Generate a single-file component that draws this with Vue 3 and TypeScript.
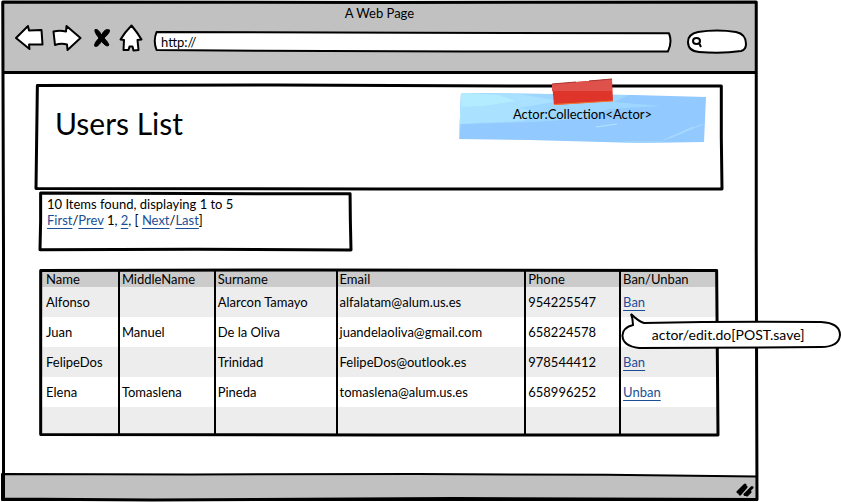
<script setup lang="ts">
import { ref } from 'vue'

interface User {
  name: string
  middleName: string
  surname: string
  email: string
  phone: string
  action: string
}

const columns = [
  { label: 'Name', weight: 78 },
  { label: 'MiddleName', weight: 96 },
  { label: 'Surname', weight: 122 },
  { label: 'Email', weight: 189 },
  { label: 'Phone', weight: 95 },
  { label: 'Ban/Unban', weight: 99 },
]
const totalWeight = columns.reduce((sum, c) => sum + c.weight, 0)

const users: User[] = [
  { name: 'Alfonso', middleName: '', surname: 'Alarcon Tamayo', email: 'alfalatam@alum.us.es', phone: '954225547', action: 'Ban' },
  { name: 'Juan', middleName: 'Manuel', surname: 'De la Oliva', email: 'juandelaoliva@gmail.com', phone: '658224578', action: '' },
  { name: 'FelipeDos', middleName: '', surname: 'Trinidad', email: 'FelipeDos@outlook.es', phone: '978544412', action: 'Ban' },
  { name: 'Elena', middleName: 'Tomaslena', surname: 'Pineda', email: 'tomaslena@alum.us.es', phone: '658996252', action: 'Unban' },
  { name: '', middleName: '', surname: '', email: '', phone: '', action: '' },
]

const address = ref('http://')
const query = ref('')
</script>

<template>
  <div class="page">
    <div class="window">
      <header class="chrome">
        <div class="window-title">A Web Page</div>
        <div class="toolbar">
          <nav class="nav-buttons">
            <button type="button" class="tool back" aria-label="Back">
              <svg width="30" height="28" viewBox="0 0 30 28"><path d="M2 14 14 2 15 6.500 27.500 6 28.500 20.500 15 20.500 15.500 25Z" /></svg>
            </button>
            <button type="button" class="tool forward" aria-label="Forward">
              <svg width="30" height="28" viewBox="0 0 30 28"><path d="M1.500 7.500Q8 6 14 7.500L14.500 2 28.500 14 15.500 26 15 20.500Q9 19 3 21Z" /></svg>
            </button>
            <button type="button" class="tool stop" aria-label="Stop">
              <svg width="18" height="22" viewBox="0 0 18 22">
                <path class="solid" d="M2 2.500Q5 1.500 8.500 8Q12 1 16.500 3Q17 6 11 11Q15 15 16 18Q14 21 8.500 14.500Q4 21 1.500 19Q1 16 6 11Q1 5 2 2.500Z" />
              </svg>
            </button>
            <button type="button" class="tool home" aria-label="Home">
              <svg width="24" height="28" viewBox="0 0 24 28"><path d="M12.500 1.500Q18 8 22.500 15.500L18.500 16 19.500 26 14.500 26.500 13.500 22.500 10.500 22.500 9.500 26 4.500 26 5 16 1.500 15.500Q6 8 12.500 1.500Z" /></svg>
            </button>
          </nav>
          <label class="address">
            <svg class="sketch" viewBox="0 0 100 100" preserveAspectRatio="none" aria-hidden="true">
              <path class="filled" d="M0.300 0 50 4 99.600 6Q100.300 50 99.400 98L60 97 20 94 0.300 90Q-0.400 45 0.300 0Z" />
            </svg>
            <input v-model="address" type="text" aria-label="Address" />
          </label>
          <label class="search">
            <svg class="sketch" viewBox="0 0 60 24" preserveAspectRatio="none" aria-hidden="true">
              <path class="filled" d="M11 2Q30 -1 49 2Q59 4 59 14Q59 20 54 21Q35 24 12 22Q1 21 1 12Q1 4 11 2Z" />
            </svg>
            <svg class="lens" width="12" height="14" viewBox="0 0 12 14" aria-hidden="true">
              <path d="M5.500 3Q2 3 2 6Q2 9 5.500 9Q9 9 9 6Q9 3 5.500 3M8 8 10 12" />
            </svg>
            <input v-model="query" type="search" aria-label="Search" />
          </label>
        </div>
      </header>

      <main class="content">
        <section class="panel heading">
          <svg class="sketch" viewBox="0 0 100 100" preserveAspectRatio="none" aria-hidden="true">
            <path d="M0.200 0.500 35 0 70 1 99.900 1 99.900 50 100 100 50 100 0 99.500 0.100 50Z" />
          </svg>
          <h1>Users List</h1>
          <div class="note">
            <svg class="note-paper" viewBox="0 0 247 50" preserveAspectRatio="none" aria-hidden="true">
              <path fill="#92c9ff" d="M2 0 90 1 175 2 247 4 245 49 180 50 70 47 0 46Z" />
              <path fill="#9dd7ff" d="M2 0 90 1 170 2 155 9 202 13 150 16 120 26 74 29 1 31Z" />
              <path fill="#a9e1ff" d="M2 0 60 1 100 8 60 15 84 20 63 28 1 31Z" />
              <path fill="#b4ecff" d="M2 0 39 2 57 8 24 13 2 14Z" />
              <path fill="none" stroke="#b0e7ff" d="M3 4 0 45M62 6H66M137 34 158 31" />
              <path fill="none" stroke="#aadcff" d="M205 47 234 34M211 45 244 31M165 49H205" />
            </svg>
            <svg class="tape" width="62" height="28" viewBox="0 0 62 28" aria-hidden="true">
              <path fill="#df3429" d="M0 6 60 1 61 23 2 27Z" />
              <path fill="#df514b" d="M0 6 60 1 60 13 0 13Z" />
              <path fill="none" stroke="#a93834" d="M0 6 24 4M37 3 60 1" />
              <path fill="none" stroke="#f07832" d="M2 26.500 61 23" />
            </svg>
            <span>Actor:Collection&lt;Actor&gt;</span>
          </div>
        </section>

        <section class="panel pager">
          <svg class="sketch" viewBox="0 0 100 100" preserveAspectRatio="none" aria-hidden="true">
            <path d="M0.200 0 50 1 99.700 1.500 99.800 50 100 100 50 98.500 0 99.500 0.200 50Z" />
          </svg>
          <div>10 Items found, displaying 1 to 5</div>
          <div><a href="#first">First</a>/<a href="#prev">Prev</a> 1, <a href="#page-2">2</a>, [ <a href="#next">Next</a>/<a href="#last">Last</a>]</div>
        </section>

        <section class="users">
          <table>
            <colgroup>
              <col v-for="c in columns" :key="c.label" :style="{ width: (c.weight / totalWeight) * 100 + '%' }" />
            </colgroup>
            <thead>
              <tr>
                <th v-for="c in columns" :key="c.label" scope="col">{{ c.label }}</th>
              </tr>
            </thead>
            <tbody>
              <tr v-for="(u, i) in users" :key="i">
                <td>{{ u.name }}</td>
                <td>{{ u.middleName }}</td>
                <td>{{ u.surname }}</td>
                <td>{{ u.email }}</td>
                <td>{{ u.phone }}</td>
                <td class="action">
                  <a v-if="u.action" href="#edit">{{ u.action }}</a>
                  <div v-if="i === 0" class="callout" role="tooltip">
                    <svg viewBox="0 0 220 36" aria-hidden="true">
                      <path d="M12 12Q12 6 10 1Q17 8 23 10Q110 8 200 9Q219 10 219 22Q218 34 200 34Q110 35 18 35Q2 33 1.500 23Q1 15 12 12Z" />
                    </svg>
                    <span>actor/edit.do[POST.save]</span>
                  </div>
                </td>
              </tr>
            </tbody>
          </table>
          <svg class="sketch" viewBox="0 0 100 100" preserveAspectRatio="none" aria-hidden="true">
            <path d="M0.100 0.300 40 0 99.800 0.300 99.900 50 100 100 50 100 0.100 99.700 0.100 50Z" />
          </svg>
        </section>
      </main>

      <footer class="status">
        <svg class="sketch" viewBox="0 0 100 100" preserveAspectRatio="none" aria-hidden="true">
          <path class="bar" d="M0 0 25 2 55 0 80 3 100 10V100H0Z" />
        </svg>
        <svg class="grip" width="18" height="14" viewBox="0 0 18 14" aria-hidden="true">
          <path d="M2 9 9 2M4 11 10 4M9 11.500 16 4.500M11 12 14 9" />
        </svg>
      </footer>

      <svg class="sketch outline" viewBox="0 0 100 100" preserveAspectRatio="none" aria-hidden="true">
        <path d="M0.100 0 50 0.100 99.900 0 99.900 50 100 99.900 60 99.700 20 100 0.200 99.800 0.200 50Z" />
      </svg>
    </div>
  </div>
</template>

<style>
body {
  margin: 0;
  background: #fff;
}
</style>

<style scoped>
* {
  box-sizing: border-box;
}

.page {
  display: flex;
  min-height: 100vh;
  padding: 2px 84px 2px 2px;
  color: #000;
  font-family: Lato, sans-serif;
  font-size: 13px;
  line-height: 16px;
}

.window {
  position: relative;
  display: flex;
  flex: 1;
  flex-direction: column;
  min-width: 0;
}

.sketch {
  position: absolute;
  inset: 0;
  width: 100%;
  height: 100%;
  overflow: visible;
  pointer-events: none;
}

.sketch path {
  fill: none;
  stroke: #000;
  stroke-width: 2px;
  stroke-linejoin: round;
  vector-effect: non-scaling-stroke;
}

.sketch .filled {
  fill: #fff;
}

.sketch .bar {
  fill: #c1c1c1;
}

.outline path {
  stroke-width: 3px;
}

.chrome {
  height: 72px;
  padding-top: 3px;
  border-bottom: 3px solid #000;
  background: #c1c1c1;
}

.window-title {
  text-align: center;
}

.toolbar {
  display: flex;
  align-items: center;
  gap: 12px;
  margin-top: 1px;
  padding: 0 10px 0 12px;
}

.nav-buttons {
  display: flex;
  align-items: center;
  gap: 8px;
}

.tool {
  display: block;
  padding: 0;
  border: 0;
  background: none;
}

.tool svg {
  display: block;
  fill: #fff;
  stroke: #000;
  stroke-width: 2px;
  stroke-linejoin: round;
}

.tool .solid {
  fill: #000;
  stroke-width: 1px;
}

.stop {
  margin-left: 3px;
}

.address,
.search {
  position: relative;
  display: flex;
  align-items: center;
  margin-top: 8px;
}

.address {
  flex: 1;
  height: 20px;
}

.search {
  width: 60px;
  height: 24px;
  margin-left: 4px;
}

input {
  position: relative;
  width: 100%;
  min-width: 0;
  padding: 0 6px;
  border: 0;
  outline: 0;
  background: none;
  color: inherit;
  font: inherit;
}

.lens {
  position: relative;
  flex: none;
  margin-left: 4px;
  fill: none;
  stroke: #000;
  stroke-width: 2px;
}

.search input {
  padding: 0 4px 0 2px;
  appearance: none;
}

.content {
  flex: 1;
  padding: 11px 35px 36px 34px;
}

.panel {
  position: relative;
}

.panel .sketch path,
.users .sketch path {
  stroke-width: 3px;
}

.heading {
  display: flex;
  align-items: flex-start;
  justify-content: space-between;
  height: 104px;
  padding: 8px 16px 0 19px;
}

h1 {
  margin: 13px 0 0;
  font-size: 30px;
  font-weight: 400;
  line-height: 34px;
}

.note {
  position: relative;
  width: 247px;
  height: 50px;
  padding-top: 13px;
  text-align: center;
}

.note span {
  position: relative;
}

.note-paper {
  position: absolute;
  inset: 0;
  width: 100%;
  height: 100%;
}

.tape {
  position: absolute;
  top: -15px;
  left: 93px;
}

.pager {
  width: 311px;
  height: 57px;
  margin: 4px 0 0 4px;
  padding: 3px 7px;
}

a {
  color: #1a4f96;
  text-decoration: underline;
  text-decoration-thickness: 1px;
  text-underline-offset: 3px;
}

.users {
  position: relative;
  margin: 20px 4px 0;
}

table {
  width: 100%;
  border-spacing: 0;
  table-layout: fixed;
}

th,
td {
  padding: 0 0 0 2px;
  border-left: 2px solid #000;
  font-weight: 400;
  text-align: left;
  white-space: nowrap;
}

th:first-child,
td:first-child {
  padding-left: 6px;
  border-left: 0;
}

th {
  height: 17px;
  padding-top: 1px;
  background: #cbcbcb;
}

td {
  height: 30px;
}

tbody tr:nth-child(odd) {
  background: #ededed;
}

tbody tr:last-child td {
  height: 28px;
}

.users .sketch {
  z-index: 1;
}

.action {
  position: relative;
}

.callout {
  position: absolute;
  z-index: 2;
  top: 26px;
  left: 0;
  width: 220px;
  height: 36px;
  padding: 14px 6px 0 0;
  font-size: 14px;
  text-align: center;
}

.callout svg {
  position: absolute;
  inset: 0;
  fill: #fff;
  stroke: #000;
  stroke-width: 2px;
}

.callout span {
  position: relative;
}

.status {
  position: relative;
  display: flex;
  align-items: center;
  justify-content: flex-end;
  height: 26px;
  padding: 5px 3px 0 0;
}

.grip {
  position: relative;
  fill: none;
  stroke: #000;
  stroke-width: 3px;
  stroke-linecap: round;
}
</style>
